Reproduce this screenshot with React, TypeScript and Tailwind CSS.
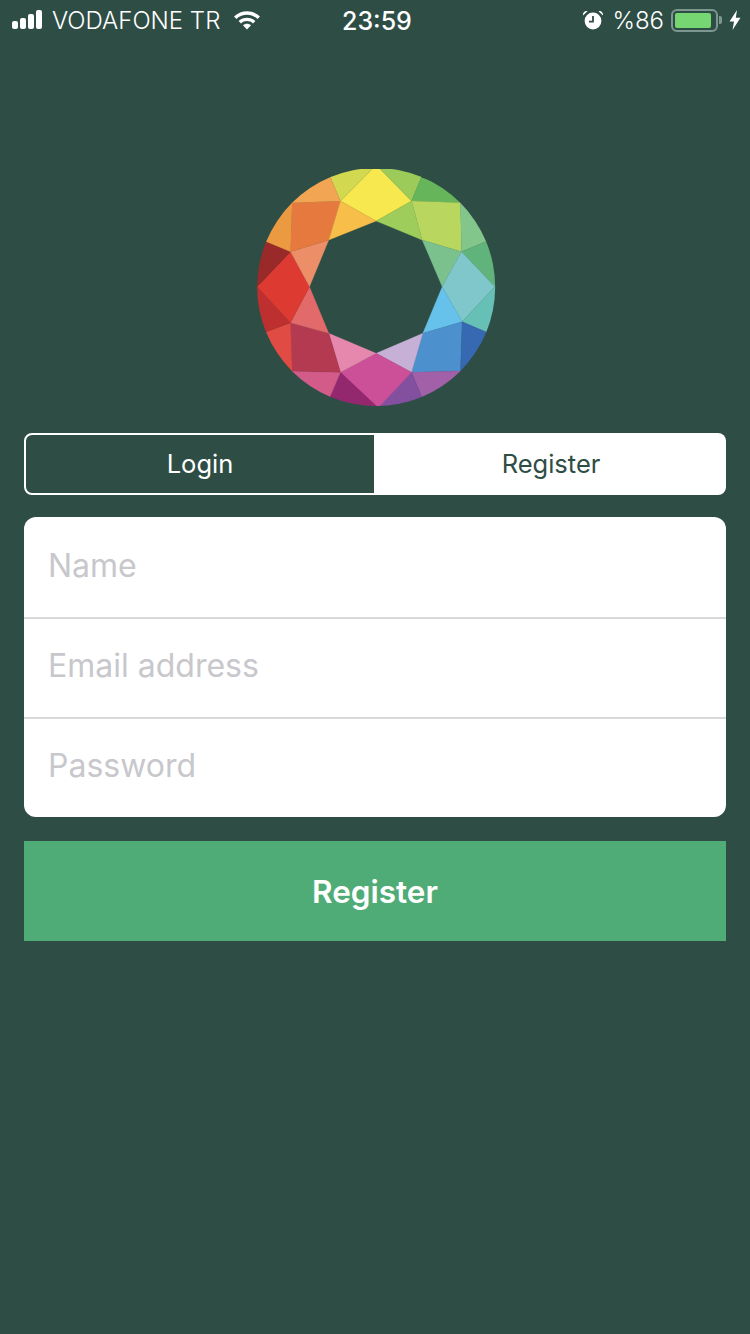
import React from 'react'

const font = { fontFamily: 'Inter, "Liberation Sans", sans-serif' }

// logo facets, traced at 3x
const facets: [string, string][] = [
  ['407,30 513,138 407,198 300,138', '#f6e84e'],
  ['270,68 250,30 407,30 300,138', '#d2d84f'],
  ['407,30 560,30 542,68 513,138', '#9dcb5a'],
  ['542,68 700,100 660,143 513,138', '#66b55a'],
  ['513,138 660,143 663,290 545,255', '#b9d65f'],
  ['407,198 513,138 545,255', '#9fcd5c'],
  ['545,255 663,290 605,395', '#7bc18e'],
  ['660,143 700,100 780,240 735,260 663,290', '#82c68c'],
  ['735,260 780,240 780,395 763,395 663,290', '#60b37a'],
  ['663,290 763,395 665,500 605,395', '#7fc7cb'],
  ['763,395 780,395 780,550 735,530 665,500', '#67c0b6'],
  ['605,395 665,500 547,535', '#66c2ea'],
  ['547,535 665,500 660,648 513,652', '#4d90ce'],
  ['665,500 735,530 780,550 700,690 660,648', '#3768b2'],
  ['547,535 513,652 407,595', '#c6b0d6'],
  ['513,652 660,648 700,690 560,765 542,722', '#a160a8'],
  ['513,652 542,722 560,765 407,765 407,752', '#834f9f'],
  ['407,595 513,652 407,765 300,652', '#cc5098'],
  ['300,652 407,752 407,765 250,765 270,722', '#93286f'],
  ['155,648 300,652 270,722 250,765 110,690', '#d35b8a'],
  ['265,535 407,595 300,652', '#e688ad'],
  ['150,503 265,535 300,652 155,648', '#b43a52'],
  ['78,530 150,503 155,648 110,690 30,550', '#e04b44'],
  ['30,395 50,395 150,503 78,530 30,550', '#be2f2f'],
  ['207,395 265,535 150,503', '#e26a6a'],
  ['50,395 150,290 207,395 150,503', '#dd3a32'],
  ['30,240 78,260 150,290 50,395 30,395', '#9a2a2a'],
  ['150,290 265,255 207,395', '#ec8e68'],
  ['155,143 300,138 265,255 150,290', '#e67a3e'],
  ['110,100 155,143 150,290 78,260 30,240', '#ec9a42'],
  ['110,100 250,30 270,68 300,138 155,143', '#f2a553'],
  ['300,138 407,198 265,255', '#f7be4a'],
]

function Logo() {
  return (
    <svg width="243" height="238" viewBox="40.5 42 729 714">
      <defs>
        <clipPath id="gem">
          <circle cx="407" cy="396" r="357" />
        </clipPath>
      </defs>
      <g clipPath="url(#gem)">
        {facets.map(([points, fill]) => (
          <polygon key={points} points={points} fill={fill} stroke={fill} strokeWidth="0.8" />
        ))}
      </g>
    </svg>
  )
}

function StatusBar() {
  return (
    <div className="h-10 flex items-center justify-between pl-3 pr-[9px] text-white relative text-[24px]" style={font}>
      <div className="flex items-center">
        <div className="flex items-end gap-[2px] h-[18px]">
          <div className="w-[6px] h-[8px] rounded-[2px] bg-white" />
          <div className="w-[6px] h-[11px] rounded-[2px] bg-white" />
          <div className="w-[6px] h-[15px] rounded-[2px] bg-white" />
          <div className="w-[6px] h-[19px] rounded-[2px] bg-white" />
        </div>
        <span className="ml-[10px] pt-[1px] font-light">VODAFONE TR</span>
        <svg className="ml-[13px]" width="28" height="20" viewBox="0 0 28 20" fill="none">
          <path d="M1 6.5C8.5 -0.5 19.5 -0.5 27 6.5L24.6 9C18.5 3.4 9.5 3.4 3.4 9Z" fill="white" />
          <path d="M5.6 11C10.6 6.6 17.4 6.6 22.4 11L20 13.4C16.4 10.2 11.6 10.2 8 13.4Z" fill="white" />
          <path d="M10 15.2C12.4 13.2 15.6 13.2 18 15.2L14 19.6Z" fill="white" />
        </svg>
      </div>
      <span className="absolute left-[342px] top-[1px] leading-[40px] text-[25px] font-medium">23:59</span>
      <div className="flex items-center">
        <svg width="22" height="22" viewBox="0 0 22 22">
          <path d="M1 6.5L5.5 2.2C3 1.6 0.6 3.6 1 6.5Z M21 6.5L16.5 2.2C19 1.6 21.4 3.6 21 6.5Z" fill="white" />
          <circle cx="11" cy="12" r="8.4" fill="white" />
          <path d="M11 7V12.6H7" fill="none" stroke="#2e4d45" strokeWidth="1.8" />
        </svg>
        <span className="ml-[8px] pt-[1px] font-light">%86</span>
        <div className="ml-[7px] w-[47px] h-[23px] rounded-[6px] border-2 border-[#7d9790] p-[2px]">
          <div className="w-[36px] h-full rounded-[2px] bg-[#76d672]" />
        </div>
        <div className="w-[3px] h-[8px] rounded-r-[2px] bg-[#7d9790] ml-[1px]" />
        <svg className="ml-[7px]" width="12" height="20" viewBox="0 0 12 20">
          <path d="M8 0L0.5 11.5H5L3.5 20L11.5 7.8H6.8Z" fill="white" />
        </svg>
      </div>
    </div>
  )
}

export default function App() {
  const fields = ['Name', 'Email address', 'Password']

  return (
    <div className="min-h-[1334px] bg-[#2e4d45]" style={font}>
      <StatusBar />

      <div className="flex justify-center mt-[129px]">
        <Logo />
      </div>

      <div className="px-6 mt-[26px]">
        {/* Tabs */}
        <div className="flex h-[62px] text-[25.5px]">
          <button className="w-[352px] pt-[1px] rounded-l-lg border-2 border-white text-white">Login</button>
          <button className="flex-1 pt-[1px] rounded-r-lg bg-white text-[#2e4d45]">Register</button>
        </div>

        {/* Form */}
        <div className="mt-[22px] bg-white rounded-xl overflow-hidden">
          {fields.map(field => (
            <div
              key={field}
              className="h-[100px] flex items-center pl-[24px] pb-1 first:pb-[2px] border-t-2 first:border-t-0 border-[#d9d9d9]"
            >
              <input
                placeholder={field}
                className="w-full text-[32px] outline-none placeholder:text-[#c7c7cc]"
              />
            </div>
          ))}
        </div>

        <button className="mt-6 w-full h-[100px] pt-[1px] bg-[#50ac76] text-white text-[31.5px] font-semibold">
          Register
        </button>
      </div>
    </div>
  )
}
